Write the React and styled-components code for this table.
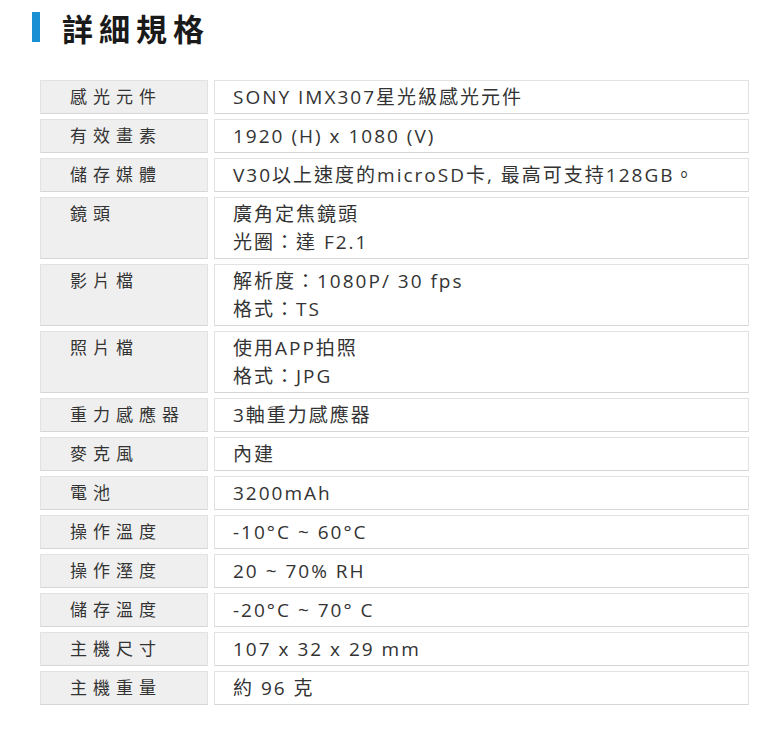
import React from 'react';
import styled, { createGlobalStyle } from 'styled-components';

const GlobalStyle = createGlobalStyle`
  body {
    margin: 0;
    background: #fff;
    font-family: "Open Sans", "Noto Sans CJK TC", sans-serif;
    color: #333;
  }
`;

const Page = styled.div`
  width: 781px;
  padding: 8px 0 0 0;
`;

const Heading = styled.h2`
  display: flex;
  align-items: center;
  margin: 0 0 34px 32px;
  height: 38px;
  font-family: "Noto Sans CJK TC", sans-serif;
  font-size: 31px;
  font-weight: 700;
  letter-spacing: 6px;
  color: #1a1a1a;
  &::before {
    content: "";
    display: block;
    width: 8px;
    height: 30px;
    background: #1b8fd4;
    margin-right: 22px;
  }
`;

const Table = styled.div`
  display: flex;
  flex-direction: column;
  gap: 5px;
  margin-left: 40px;
  width: 709px;
`;

const Row = styled.div`
  display: grid;
  grid-template-columns: 168px 535px;
  column-gap: 6px;
`;

const Cell = styled.div`
  box-sizing: border-box;
  min-height: 34px;
  padding: 2px 0 2px 18px;
  border: 1px solid #e2e2e2;
  border-bottom-color: #d6d6d6;
  font-size: 19px;
  line-height: 28px;
  letter-spacing: 2px;
  color: #333;
`;

const Label = styled(Cell)`
  background: #efefef;
  padding-left: 29px;
  font-size: 17px;
  letter-spacing: 6px;
`;

const Value = styled(Cell)`
  background: #fff;
`;

const specs = [
  ['感光元件', ['SONY IMX307星光級感光元件']],
  ['有效畫素', ['1920 (H) x 1080 (V)']],
  ['儲存媒體', ['V30以上速度的microSD卡, 最高可支持128GB。']],
  ['鏡頭', ['廣角定焦鏡頭', '光圈：達 F2.1']],
  ['影片檔', ['解析度：1080P/ 30 fps', '格式：TS']],
  ['照片檔', ['使用APP拍照', '格式：JPG']],
  ['重力感應器', ['3軸重力感應器']],
  ['麥克風', ['內建']],
  ['電池', ['3200mAh']],
  ['操作溫度', ['-10°C ~ 60°C']],
  ['操作溼度', ['20 ~ 70% RH']],
  ['儲存溫度', ['-20°C ~ 70° C']],
  ['主機尺寸', ['107 x 32 x 29 mm']],
  ['主機重量', ['約 96 克']],
];

const App = () => {
  return (
    <Page>
      <GlobalStyle />
      <Heading>詳細規格</Heading>
      <Table>
        {specs.map(([label, lines]) => (
          <Row key={label}>
            <Label>{label}</Label>
            <Value>
              {lines.map(line => (
                <div key={line}>{line}</div>
              ))}
            </Value>
          </Row>
        ))}
      </Table>
    </Page>
  );
};

export default App;
